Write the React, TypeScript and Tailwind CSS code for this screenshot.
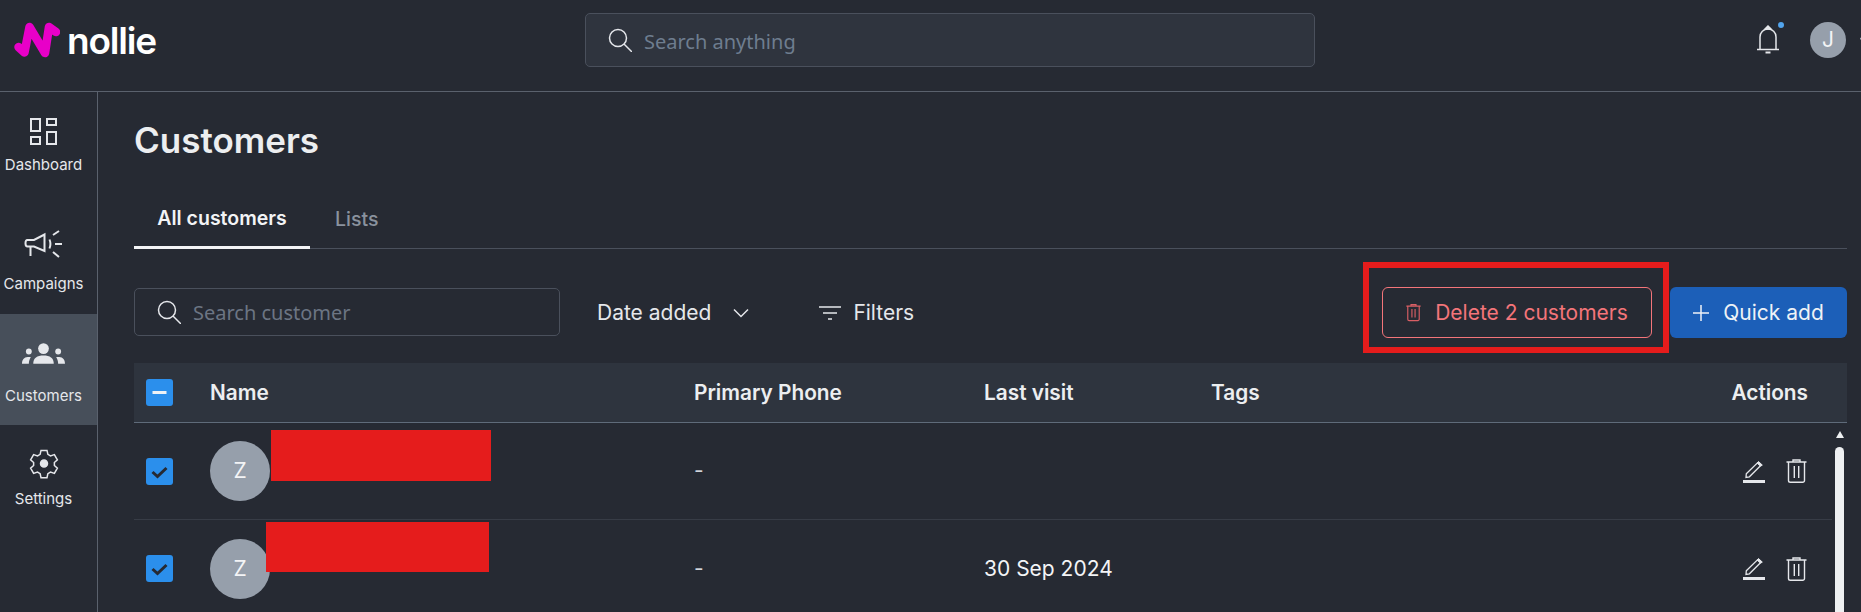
const Search = () => (
  <svg width="24" height="24" viewBox="0 0 24 24" fill="none" stroke="#e5e7eb" strokeWidth="1.5" className="shrink-0">
    <circle cx="10" cy="10" r="8.500" />
    <path d="M16 16l8 8" />
  </svg>
);

const Trash = ({ color, w = 21, h = 24, sw = 1.4 }: { color: string; w?: number; h?: number; sw?: number }) => (
  <svg width={w} height={h} viewBox="0 0 21 24" fill="none" stroke={color} strokeWidth={sw} className="shrink-0">
    <path d="M0.500 3h20M7 3V1h7v2M2.500 3v18.500a1.800 1.800 0 0 0 1.800 1.800h12.400a1.800 1.800 0 0 0 1.800-1.800V3M8.300 7v12M12.700 7v12" />
  </svg>
);

const Edit = () => (
  <svg width="22" height="23" viewBox="0 0 22 23" fill="none" stroke="#e5e7eb" className="shrink-0">
    <path d="M3.300 13.800L14.500 2.800l3 3L6.400 16.800l-3.400.6z" strokeWidth="1.300" />
    <path d="M15.500 1.500l3.800 3.600-1.600 1L14.300 3z" fill="#e5e7eb" strokeWidth="1" />
    <path d="M0 21.500h22" strokeWidth="3" />
  </svg>
);

const CheckBox = ({ mode }: { mode: "check" | "minus" }) => (
  <div className="flex h-[27px] w-[27px] items-center justify-center rounded-[3px] bg-[#2b8fec]">
    <svg width="27" height="27" viewBox="0 0 27 27" fill="none">
      {mode === "check" ? (
        <path d="M6.500 14l5 4.500 9-8.500" stroke="#262a33" strokeWidth="3" />
      ) : (
        <path d="M6.500 13.500h14" stroke="#eef2f6" strokeWidth="3" />
      )}
    </svg>
  </div>
);

function Row({ date, last }: { date?: string; last?: boolean }) {
  return (
    <div className={`flex h-[97px] items-center pr-[25px] ${last ? "" : "border-b border-[#373c46]"}`}>
      <div className="flex w-[76px] shrink-0 pl-[12px]">
        <CheckBox mode="check" />
      </div>
      <div className="w-[484px] shrink-0">
        <div className="flex h-[60px] w-[60px] items-center justify-center rounded-full bg-[#969fab] text-[21px] text-[#f3f4f6]">
          Z
        </div>
      </div>
      <div className="w-[290px] shrink-0 text-[21px] text-[#d1d5db]">-</div>
      <div className="flex-1 text-[21px] text-[#f3f4f6]">{date}</div>
      <div className="flex items-center gap-[21px]">
        <Edit />
        <Trash color="#e5e7eb" />
      </div>
    </div>
  );
}

export default function App() {
  return (
    <div
      className="relative flex h-[612px] w-[1861px] flex-col overflow-hidden bg-[#262a33] text-white"
      style={{ fontFamily: "Inter, sans-serif" }}
    >
      <header className="relative flex h-[92px] shrink-0 items-center border-b border-[#5a616d] pb-[11px]">
        <div className="flex w-[585px] shrink-0 items-center pl-[14px]">
          <svg width="46" height="36" viewBox="0 0 46 36" fill="none" stroke="#e800c8" strokeWidth="8.500" strokeLinecap="round" strokeLinejoin="round">
            <path d="M4.500 25L10.500 30.500L15.500 5L31 31L35 5L42 10" />
          </svg>
          <span className="ml-[7px] text-[37px] font-semibold leading-none tracking-[-1.200px] text-white">nollie</span>
        </div>
        <div className="flex h-[54px] w-[730px] shrink-0 items-center rounded-[5px] border border-[#4a505c] bg-[#2f343e] pl-[22px]">
          <Search />
          <span className="ml-[12px] pt-[3px] text-[20px] text-[#6e7d8f]" style={{ fontFamily: "'Noto Sans', sans-serif" }}>
            Search anything
          </span>
        </div>
        <div className="flex flex-1 items-center pl-[441px]">
          <div className="relative">
            <svg width="24" height="30" viewBox="0 0 24 30" fill="none" stroke="#e5e7eb" strokeWidth="1.500" className="block">
              <path d="M4 24V12a8 8 0 0 1 16 0v12M1 24.500h22" />
              <path d="M12 1l3 3H9z" fill="#e5e7eb" />
              <path d="M9.500 27.500h5" strokeWidth="2" />
            </svg>
            <div className="absolute right-[-4px] top-[-3px] h-[6px] w-[6px] rounded-full bg-[#52a5ee]" />
          </div>
          <div className="ml-[30px] flex h-[36px] w-[36px] shrink-0 items-center justify-center rounded-full bg-[#969fab] text-[21px] text-[#f3f4f6]">
            J
          </div>
          <svg width="10" height="10" viewBox="0 0 10 10" className="ml-[14px] shrink-0">
            <path d="M0 3l4 4 4-4" stroke="#9ca3af" fill="none" strokeWidth="1.500" />
          </svg>
        </div>
      </header>
      <div className="flex min-h-0 flex-1">
        <aside className="flex w-[98px] shrink-0 flex-col border-r border-[#5a616d] text-[15px] leading-[17px] text-[#e5e7eb]">
          <div className="flex h-[111px] flex-col items-center pr-[10px] pt-[26px]">
            <svg width="27" height="27" viewBox="0 0 27 27" fill="none" stroke="#e5e7eb" strokeWidth="2" className="shrink-0">
              <rect x="1" y="1" width="9" height="12" />
              <rect x="17" y="1" width="9" height="6" />
              <rect x="1" y="19" width="9" height="7" />
              <rect x="17" y="14" width="9" height="12" />
            </svg>
            <span className="mt-[11px]">Dashboard</span>
          </div>
          <div className="flex h-[111px] flex-col items-center pr-[10px] pt-[24px]">
            <svg width="40" height="32" viewBox="0 0 40 32" fill="none" stroke="#e5e7eb" strokeWidth="2" className="shrink-0">
              <path d="M3.500 13H10L20.500 7.500V24L10 19.500H3.500Q1.500 19.500 1.500 16.200T3.500 13ZM6.500 19.500V29" />
              <path d="M25.500 12.500c1.200 3 1.200 6 0 9M31 17h7M29 8l6-4M29 25l6 5" />
            </svg>
            <span className="mt-[16px]">Campaigns</span>
          </div>
          <div className="flex h-[111px] flex-col items-center bg-[#474f5a] pr-[10px] pt-[29px]">
            <svg width="43" height="21" viewBox="0 0 44 21" fill="#e5e7eb" className="shrink-0">
              <circle cx="22" cy="5.500" r="5.500" />
              <path d="M11.500 21c0-6 4-8.500 10.500-8.500S32.500 15 32.500 21z" />
              <circle cx="7" cy="8.500" r="3" />
              <circle cx="37" cy="8.500" r="3" />
              <path d="M0 21c0-4 2-7 6-7h3c-1 2-2 4-2 7zM44 21c0-4-2-7-6-7h-3c1 2 2 4 2 7z" />
            </svg>
            <span className="mt-[23px]">Customers</span>
          </div>
          <div className="flex flex-1 flex-col items-center pr-[10px] pt-[23px]">
            <svg width="30" height="31" viewBox="0 0 24 24" fill="none" stroke="#e5e7eb" strokeWidth="1.200" className="shrink-0">
              <path d="M9.600 1.500h4.800l.7 3.200 2.100 1.200 3.100-1 2.400 4.200-2.400 2.100v2.400l2.400 2.100-2.400 4.200-3.100-1-2.100 1.200-.7 3.200H9.600l-.7-3.200-2.100-1.200-3.100 1-2.400-4.200 2.400-2.100v-2.400L1.300 9.100l2.400-4.200 3.100 1 2.100-1.200z" />
              <circle cx="12" cy="12" r="2.800" fill="#e5e7eb" />
            </svg>
            <span className="mt-[11px]">Settings</span>
          </div>
        </aside>
        <main className="min-w-0 flex-1 pl-[36px] pr-[14px]">
          <h1 className="mt-[26px] text-[35px] font-semibold leading-[44px] text-[#eceef0]">Customers</h1>
          <div className="mt-[29px] flex h-[58px] border-b border-[#4a505c] text-[19.500px] font-semibold">
            <div className="flex h-[58px] w-[176px] items-center justify-center border-b-[3px] border-[#f3f4f6] text-[#f3f4f6]">
              All customers
            </div>
            <div className="ml-[25px] flex h-[58px] items-center font-medium text-[#8a929e]">Lists</div>
          </div>
          <div className="mt-[38px] flex h-[51px] items-center text-[21px]">
            <div className="mt-[-1px] flex h-[48px] w-[426px] items-center rounded-[5px] border border-[#4a505c] pl-[22px]">
              <Search />
              <span className="ml-[12px] pt-[1px] text-[20px] text-[#6c7583]" style={{ fontFamily: "'Noto Sans', sans-serif" }}>
                Search customer
              </span>
            </div>
            <div className="ml-[37px] flex items-center text-[#e5e7eb]">
              Date added
              <svg width="16" height="10" viewBox="0 0 16 10" fill="none" stroke="#e5e7eb" strokeWidth="1.500" className="ml-[22px]">
                <path d="M1 1.500l7 7 7-7" />
              </svg>
            </div>
            <div className="ml-[70px] flex items-center text-[#e5e7eb]">
              <svg width="22" height="14" viewBox="0 0 22 14" fill="none" stroke="#e5e7eb" strokeWidth="1.500" className="mr-[12px]">
                <path d="M0 1h22M4 7h14M9 13h4" />
              </svg>
              Filters
            </div>
            <button className="ml-auto flex h-[51px] w-[270px] items-center justify-center rounded-[6px] border border-[#f4757a] text-[#f4757a]">
              <Trash color="#d95f65" w={15} h={19} sw={1.600} />
              <span className="ml-[14px]">Delete 2 customers</span>
            </button>
            <button className="ml-[18px] flex h-[51px] w-[177px] items-center justify-center rounded-[6px] bg-[#1c5fb8] text-[#eef2f6]">
              <svg width="16" height="16" viewBox="0 0 16 16" stroke="#eef2f6" strokeWidth="1.500" className="mr-[14px]">
                <path d="M8 0v16M0 8h16" />
              </svg>
              Quick add
            </button>
          </div>
          <div className="mt-[25px] flex h-[60px] items-center border-b border-[#5f6b7a] bg-[#2e343e] pr-[39px] text-[20.800px] font-semibold text-[#eceef0]">
            <div className="flex w-[76px] shrink-0 pl-[12px]">
              <CheckBox mode="minus" />
            </div>
            <div className="w-[484px] shrink-0 ">Name</div>
            <div className="w-[290px] shrink-0">Primary Phone</div>
            <div className="w-[227px] shrink-0">Last visit</div>
            <div className="flex-1">Tags</div>
            <div>Actions</div>
          </div>
          <div className="relative pr-[15px]">
            <Row />
            <Row date="30 Sep 2024" last />
            <div className="absolute bottom-0 right-[3px] top-[8px] w-[9px]">
              <div className="mx-auto h-0 w-0 border-x-[4.500px] border-b-[7px] border-x-transparent border-b-[#eef0f2]" />
              <div className="mt-[9px] h-[200px] rounded-t-[5px] bg-[#eef0f2]" />
            </div>
          </div>
        </main>
      </div>
      <div className="absolute left-[271px] top-[430px] h-[51px] w-[220px] bg-[#e51c1c]" />
      <div className="absolute left-[266px] top-[522px] h-[50px] w-[223px] bg-[#e51c1c]" />
      <div className="absolute left-[1363px] top-[262px] h-[91px] w-[306px] border-[6px] border-[#e51c1c]" />
    </div>
  );
}
